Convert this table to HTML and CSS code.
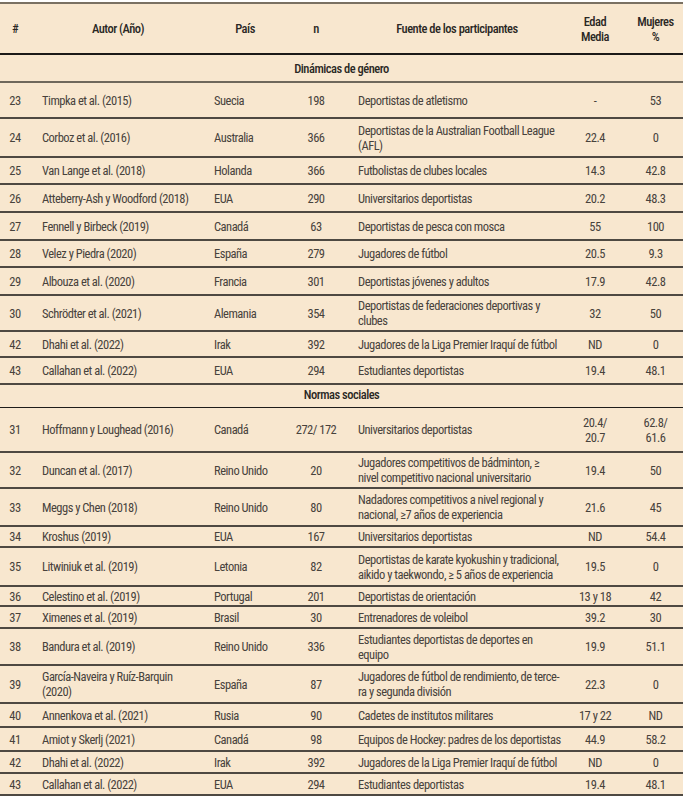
FILE: index.html
```html
<!DOCTYPE html>
<html lang="es">
<head>
<meta charset="utf-8">
<link rel="stylesheet" href="styles.css">
</head>
<body>
<div class="tbl">
  <div class="row head h51">
    <div class="c num">#</div>
    <div class="c ctr">Autor (Año)</div>
    <div class="c ctr">País</div>
    <div class="c ctr">n</div>
    <div class="c ctr fhead">Fuente de los participantes</div>
    <div class="c ctr">Edad<br>Media</div>
    <div class="c ctr">Mujeres<br>%</div>
  </div>
  <div class="sec h28">Dinámicas de género</div>

  <div class="row h36"><div class="c num">23</div><div class="c au">Timpka et al. (2015)</div><div class="c pa">Suecia</div><div class="c ctr">198</div><div class="c fu">Deportistas de atletismo</div><div class="c ctr">-</div><div class="c ctr">53</div></div>
  <div class="row h39"><div class="c num">24</div><div class="c au">Corboz et al. (2016)</div><div class="c pa">Australia</div><div class="c ctr">366</div><div class="c fu">Deportistas de la Australian Football League<br>(AFL)</div><div class="c ctr">22.4</div><div class="c ctr">0</div></div>
  <div class="row h27"><div class="c num">25</div><div class="c au">Van Lange et al. (2018)</div><div class="c pa">Holanda</div><div class="c ctr">366</div><div class="c fu">Futbolistas de clubes locales</div><div class="c ctr">14.3</div><div class="c ctr">42.8</div></div>
  <div class="row h28"><div class="c num">26</div><div class="c au">Atteberry-Ash y Woodford (2018)</div><div class="c pa">EUA</div><div class="c ctr">290</div><div class="c fu">Universitarios deportistas</div><div class="c ctr">20.2</div><div class="c ctr">48.3</div></div>
  <div class="row h28"><div class="c num">27</div><div class="c au">Fennell y Birbeck (2019)</div><div class="c pa">Canadá</div><div class="c ctr">63</div><div class="c fu">Deportistas de pesca con mosca</div><div class="c ctr">55</div><div class="c ctr">100</div></div>
  <div class="row h27"><div class="c num">28</div><div class="c au">Velez y Piedra (2020)</div><div class="c pa">España</div><div class="c ctr">279</div><div class="c fu">Jugadores de fútbol</div><div class="c ctr">20.5</div><div class="c ctr">9.3</div></div>
  <div class="row h28"><div class="c num">29</div><div class="c au">Albouza et al. (2020)</div><div class="c pa">Francia</div><div class="c ctr">301</div><div class="c fu">Deportistas jóvenes y adultos</div><div class="c ctr">17.9</div><div class="c ctr">42.8</div></div>
  <div class="row h36"><div class="c num">30</div><div class="c au">Schrödter et al. (2021)</div><div class="c pa">Alemania</div><div class="c ctr">354</div><div class="c fu">Deportistas de federaciones deportivas y<br>clubes</div><div class="c ctr">32</div><div class="c ctr">50</div></div>
  <div class="row h26"><div class="c num">42</div><div class="c au">Dhahi et al. (2022)</div><div class="c pa">Irak</div><div class="c ctr">392</div><div class="c fu">Jugadores de la Liga Premier Iraquí de fútbol</div><div class="c ctr">ND</div><div class="c ctr">0</div></div>
  <div class="row h27"><div class="c num">43</div><div class="c au">Callahan et al. (2022)</div><div class="c pa">EUA</div><div class="c ctr">294</div><div class="c fu">Estudiantes deportistas</div><div class="c ctr">19.4</div><div class="c ctr">48.1</div></div>

  <div class="sec h23 thin">Normas sociales</div>

  <div class="row h45"><div class="c num">31</div><div class="c au">Hoffmann y Loughead (2016)</div><div class="c pa">Canadá</div><div class="c ctr">272/ 172</div><div class="c fu">Universitarios deportistas</div><div class="c ctr">20.4/<br>20.7</div><div class="c ctr">62.8/<br>61.6</div></div>
  <div class="row h36"><div class="c num">32</div><div class="c au">Duncan et al. (2017)</div><div class="c pa">Reino Unido</div><div class="c ctr">20</div><div class="c fu">Jugadores competitivos de bádminton, ≥<br>nivel competitivo nacional universitario</div><div class="c ctr">19.4</div><div class="c ctr">50</div></div>
  <div class="row h38"><div class="c num">33</div><div class="c au">Meggs y Chen (2018)</div><div class="c pa">Reino Unido</div><div class="c ctr">80</div><div class="c fu">Nadadores competitivos a nivel regional y<br>nacional, ≥7 años de experiencia</div><div class="c ctr">21.6</div><div class="c ctr">45</div></div>
  <div class="row h21"><div class="c num">34</div><div class="c au">Kroshus (2019)</div><div class="c pa">EUA</div><div class="c ctr">167</div><div class="c fu">Universitarios deportistas</div><div class="c ctr">ND</div><div class="c ctr">54.4</div></div>
  <div class="row h39"><div class="c num">35</div><div class="c au">Litwiniuk et al. (2019)</div><div class="c pa">Letonia</div><div class="c ctr">82</div><div class="c fu">Deportistas de karate kyokushin y tradicional,<br>aikido y taekwondo, ≥ 5 años de experiencia</div><div class="c ctr">19.5</div><div class="c ctr">0</div></div>
  <div class="row h20"><div class="c num">36</div><div class="c au">Celestino et al. (2019)</div><div class="c pa">Portugal</div><div class="c ctr">201</div><div class="c fu">Deportistas de orientación</div><div class="c ctr">13 y 18</div><div class="c ctr">42</div></div>
  <div class="row h22"><div class="c num">37</div><div class="c au">Ximenes et al. (2019)</div><div class="c pa">Brasil</div><div class="c ctr">30</div><div class="c fu">Entrenadores de voleibol</div><div class="c ctr">39.2</div><div class="c ctr">30</div></div>
  <div class="row h37"><div class="c num">38</div><div class="c au">Bandura et al. (2019)</div><div class="c pa">Reino Unido</div><div class="c ctr">336</div><div class="c fu">Estudiantes deportistas de deportes en<br>equipo</div><div class="c ctr">19.9</div><div class="c ctr">51.1</div></div>
  <div class="row h38"><div class="c num">39</div><div class="c au">García-Naveira y Ruíz-Barquin<br>(2020)</div><div class="c pa">España</div><div class="c ctr">87</div><div class="c fu">Jugadores de fútbol de rendimiento, de terce-<br>ra y segunda división</div><div class="c ctr">22.3</div><div class="c ctr">0</div></div>
  <div class="row h24"><div class="c num">40</div><div class="c au">Annenkova et al. (2021)</div><div class="c pa">Rusia</div><div class="c ctr">90</div><div class="c fu">Cadetes de institutos militares</div><div class="c ctr">17 y 22</div><div class="c ctr">ND</div></div>
  <div class="row h24"><div class="c num">41</div><div class="c au">Amiot y Skerlj (2021)</div><div class="c pa">Canadá</div><div class="c ctr">98</div><div class="c fu">Equipos de Hockey: padres de los deportistas</div><div class="c ctr">44.9</div><div class="c ctr">58.2</div></div>
  <div class="row h22"><div class="c num">42</div><div class="c au">Dhahi et al. (2022)</div><div class="c pa">Irak</div><div class="c ctr">392</div><div class="c fu">Jugadores de la Liga Premier Iraquí de fútbol</div><div class="c ctr">ND</div><div class="c ctr">0</div></div>
  <div class="row h22"><div class="c num">43</div><div class="c au">Callahan et al. (2022)</div><div class="c pa">EUA</div><div class="c ctr">294</div><div class="c fu">Estudiantes deportistas</div><div class="c ctr">19.4</div><div class="c ctr">48.1</div></div>
</div>
</body>
</html>
```
FILE: styles.css
```css
html, body {
  margin: 0;
  padding: 0;
  background: #ffffff;
}
.tbl {
  width: 683px;
  margin-top: 2px;
  background: #f8e7cf;
  border-top: 2px solid #7a7163;
  font-family: "Roboto Condensed", "Liberation Sans", sans-serif;
  font-size: 12.5px;
  letter-spacing: -0.5px;
  line-height: 15px;
  color: #47423c;
}
.row {
  display: grid;
  grid-template-columns: 30px 176px 78px 64px 214px 66px 55px;
  box-sizing: border-box;
  border-bottom: 2px solid #4e4942;
}
.c {
  display: flex;
  align-items: center;
  white-space: nowrap;
}
.num { justify-content: center; }
.ctr { justify-content: center; text-align: center; }
.au { padding-left: 12px; }
.pa { padding-left: 8px; }
.fu { padding-left: 10px; }
.head {
  color: #2a2724;
  font-weight: 500;
  border-bottom-color: #1c1a18;
}
.fhead { padding-left: 4px; }
.sec {
  box-sizing: border-box;
  display: flex;
  align-items: center;
  justify-content: center;
  font-weight: 500;
  color: #2a2724;
  border-bottom: 2px solid #6f685c;
}
.sec.thin { border-bottom: 1px solid #1f1d1a; align-items: flex-start; padding-top: 2px; }
.h20 { height: 20px; }
.h21 { height: 21px; }
.h22 { height: 22px; }
.h23 { height: 23px; }
.h24 { height: 24px; }
.h26 { height: 26px; }
.h27 { height: 27px; }
.h28 { height: 28px; }
.h36 { height: 36px; }
.h37 { height: 37px; }
.h38 { height: 38px; }
.h39 { height: 39px; }
.h45 { height: 45px; }
.h51 { height: 51px; }
```
